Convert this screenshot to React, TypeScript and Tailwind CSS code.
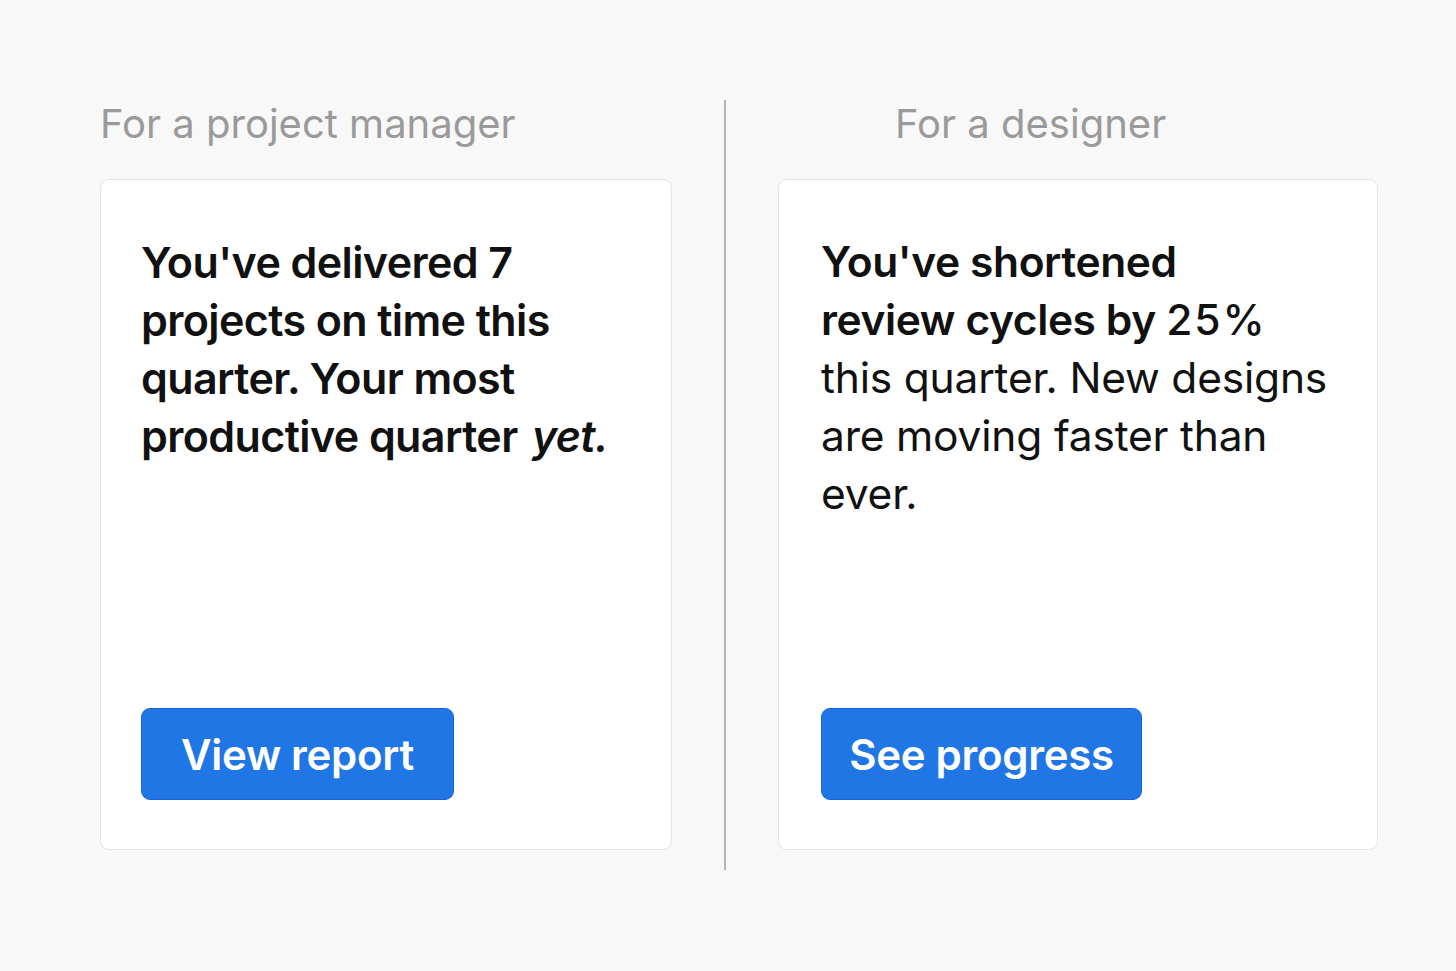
import React from "react";

const font = { fontFamily: "Inter, 'Noto Sans', sans-serif" };

function Label({ children, indent }: { children: React.ReactNode; indent?: boolean }) {
  return (
    <div
      className={`text-[40px] leading-[48px] text-[#9a9a9a] font-normal mb-[31px] ${indent ? "pl-[117px]" : ""}`}
    >
      {children}
    </div>
  );
}

function Button({ children, width }: { children: React.ReactNode; width: string }) {
  return (
    <button
      className={`${width} h-[92px] rounded-[9px] bg-[#2176e6] border border-[#1a66d8] text-white text-[42px] font-semibold tracking-[-0.3px] flex items-center justify-center`}
    >
      {children}
    </button>
  );
}

export default function App() {
  return (
    <div className="min-h-screen bg-[#f8f8f8] text-[#111]" style={font}>
      <div className="flex items-start pt-[100px] pl-[100px]">
        {/* ── Project manager ── */}
        <div className="w-[572px] flex flex-col">
          <Label>For a project manager</Label>
          <div className="h-[671px] bg-white border border-[#e4e4e4] rounded-[9px] pl-[40px] pr-[24px] pt-[53px] pb-[49px] flex flex-col justify-between">
            <p className="text-[43px] leading-[58px] font-semibold tracking-[-0.6px]">
              You've delivered 7 projects on time this quarter. Your most productive quarter{" "}
              <span className="italic pl-[4px]">yet.</span>
            </p>
            <Button width="w-[313px]">View report</Button>
          </div>
        </div>

        {/* divider */}
        <div className="w-[2px] h-[770px] bg-[#b5b5b5] ml-[52px] mr-[52px]" />

        {/* ── Designer ── */}
        <div className="w-[600px] flex flex-col">
          <Label indent>For a designer</Label>
          <div className="h-[671px] bg-white border border-[#e4e4e4] rounded-[9px] pl-[42px] pr-[30px] pt-[53px] pb-[49px] flex flex-col justify-between">
            <p className="text-[42.5px] leading-[58px] tracking-[-0.2px]">
              <span className="font-semibold tracking-[-0.4px]">
                You've shortened
                <br />
                review cycles by <span className="font-medium tracking-[2px]">25%</span>
              </span>
              <br />
              this quarter. New designs are moving faster than ever.
            </p>
            <Button width="w-[321px]">See progress</Button>
          </div>
        </div>
      </div>
    </div>
  );
}
